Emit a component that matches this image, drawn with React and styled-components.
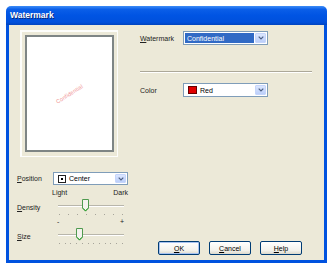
import React from "react";
import styled, { createGlobalStyle } from "styled-components";

const Global = createGlobalStyle`
  html, body { margin: 0; padding: 0; background: #fff; }
  body { font-family: "Liberation Sans", Arial, sans-serif; font-size: 7px; color: #000; }
  * { box-sizing: border-box; }
`;

const Window = styled.div`
  margin: 6px 0 0 6px;
  width: 321px;
  height: 257px;
  display: flex;
  flex-direction: column;
`;

const TitleBar = styled.div`
  height: 19px;
  flex: none;
  border-radius: 5px 5px 0 0;
  background: linear-gradient(#3d8cf7 0%, #0a5ee8 18%, #0054e3 50%, #0050dc 85%, #0043be 100%);
  color: #fff;
  font-weight: bold;
  font-size: 8.5px;
  display: flex;
  align-items: center;
  padding: 0 0 1px 4px;
  text-shadow: 1px 1px 0 #0a2a7a;
`;

const Body = styled.div`
  flex: 1;
  background: #ece9d8;
  border: 3px solid #0052df;
  border-top: none;
  display: flex;
  padding: 5px 0 5px 8px;
`;

const LeftCol = styled.div`
  width: 111px;
  display: flex;
  flex-direction: column;
`;

const RightCol = styled.div`
  margin-left: 12px;
  width: 172px;
  display: flex;
  flex-direction: column;
`;

const PreviewFrame = styled.div`
  margin-left: 3px;
  width: 98px;
  height: 127px;
  border: 1px solid #fdfdfb;
  box-shadow: inset 1px 1px 0 #fdfdfb;
  padding: 4px 3px 4px 4px;
  display: flex;
`;

const Page = styled.div`
  flex: 1;
  background: #fff;
  border: 2px solid #7e8585;
  display: flex;
  align-items: center;
  justify-content: center;
`;

const Stamp = styled.span`
  color: #f19a9a;
  font-size: 5.6px;
  transform: rotate(-32deg);
  letter-spacing: 0.1px;
`;

const Row = styled.div`
  display: flex;
  align-items: center;
  margin-top: ${(p) => p.$mt || 0}px;
`;

const Label = styled.span`
  width: ${(p) => p.$w}px;
  flex: none;
  color: #222;
`;

const Select = styled.div`
  width: ${(p) => p.$w}px;
  height: ${(p) => p.$h}px;
  border: 1px solid #7f9db9;
  background: #fff;
  display: flex;
  padding: 1px;
`;

const SelectValue = styled.div`
  flex: 1;
  display: flex;
  align-items: center;
  gap: 3px;
  padding-left: ${(p) => (p.$hl ? 2 : 3)}px;
  margin-right: 1px;
  background: ${(p) => (p.$hl ? "#316ac5" : "transparent")};
  color: ${(p) => (p.$hl ? "#fff" : "#000")};
`;

const DropBtn = styled.div`
  width: 11px;
  flex: none;
  border-radius: 1px;
  background: linear-gradient(#dbe6fe, #bccffa);
  border: 1px solid #c5d5fb;
  display: flex;
  align-items: center;
  justify-content: center;
`;

const Swatch = styled.span`
  width: 9px;
  height: 8px;
  background: #e00000;
  border: 1px solid #600;
`;

const PosIcon = styled.span`
  width: 8px;
  height: 8px;
  border: 1px solid #222;
  background: #fff;
  display: flex;
  align-items: center;
  justify-content: center;
  &::after {
    content: "";
    width: 2px;
    height: 2px;
    background: #000;
  }
`;

const Separator = styled.div`
  margin-top: ${(p) => p.$mt}px;
  height: 2px;
  border-top: 1px solid #aca899;
  border-bottom: 1px solid #fff;
`;

const ScaleLabels = styled.div`
  display: flex;
  justify-content: space-between;
  margin-top: ${(p) => p.$mt}px;
  padding-left: ${(p) => p.$pl}px;
  padding-right: ${(p) => p.$pr}px;
  height: 8px;
  line-height: 8px;
  color: #222;
`;

const SliderBox = styled.div`
  position: relative;
  width: 72px;
  height: 20px;
  margin-left: 2px;
`;

const Track = styled.div`
  position: absolute;
  left: 3px;
  right: 3px;
  top: 8px;
  height: 2px;
  border-top: 1px solid #b8b6ab;
  border-bottom: 1px solid #fff;
`;

const Thumb = styled.svg`
  position: absolute;
  top: 2px;
`;

const Ticks = styled.div`
  position: absolute;
  left: 4px;
  right: 4px;
  top: 17px;
  display: flex;
  justify-content: space-between;
`;

const Tick = styled.span`
  width: 1px;
  height: 1px;
  background: #a6a49a;
`;

const Buttons = styled.div`
  margin-top: auto;
  display: flex;
  gap: 9px;
  padding-left: 18px;
`;

const Button = styled.button`
  width: 42px;
  height: 14px;
  padding: 0;
  font: inherit;
  font-size: 7px;
  color: #000;
  border: 1px solid #003c74;
  border-radius: 2px;
  background: linear-gradient(#fff, #f3f2ec 70%, #dcd9cc);
  box-shadow: ${(p) => (p.$def ? "inset 0 0 0 1px #a8c3f0" : "none")};
  display: flex;
  align-items: center;
  justify-content: center;
`;

function Chevron() {
  return (
    <svg width="6" height="4" viewBox="0 0 6 4">
      <path d="M0.7 0.7 L3 3 L5.3 0.7" fill="none" stroke="#4d6185" strokeWidth="1.2" />
    </svg>
  );
}

function Slider({ pos, ticks }) {
  return (
    <SliderBox>
      <Track />
      <Thumb width="7" height="13" viewBox="0 0 7 13" style={{ left: pos - 3.5 }}>
        <path d="M0.5 0.5 H6.5 V9 L3.5 12.2 L0.5 9 Z" fill="#f4f3ee" stroke="#4f9a4f" strokeWidth="1" />
        <path d="M1 9.3 L3.5 11.8 L6 9.3" fill="none" stroke="#21a121" strokeWidth="1" />
      </Thumb>
      <Ticks>
        {Array.from({ length: ticks }).map((_, i) => (
          <Tick key={i} />
        ))}
      </Ticks>
    </SliderBox>
  );
}

export default function App() {
  return (
    <>
      <Global />
      <Window>
        <TitleBar>Watermark</TitleBar>
        <Body>
          <LeftCol>
            <PreviewFrame>
              <Page>
                <Stamp>Confidential</Stamp>
              </Page>
            </PreviewFrame>
            <Row $mt={15}>
              <Label $w={36}>
                <u>P</u>osition
              </Label>
              <Select $w={75} $h={13}>
                <SelectValue>
                  <PosIcon />
                  Center
                </SelectValue>
                <DropBtn>
                  <Chevron />
                </DropBtn>
              </Select>
            </Row>
            <ScaleLabels $mt={4} $pl={35} $pr={0}>
              <span>Light</span>
              <span>Dark</span>
            </ScaleLabels>
            <Row>
              <Label $w={36}>
                <u>D</u>ensity
              </Label>
              <Slider pos={30} ticks={8} />
            </Row>
            <ScaleLabels $mt={1} $pl={40} $pr={4}>
              <span>-</span>
              <span>+</span>
            </ScaleLabels>
            <Row>
              <Label $w={36}>
                <u>S</u>ize
              </Label>
              <Slider pos={24} ticks={12} />
            </Row>
          </LeftCol>
          <RightCol>
            <Row $mt={1}>
              <Label $w={43}>
                <u>W</u>atermark
              </Label>
              <Select $w={85} $h={14}>
                <SelectValue $hl>Confidential</SelectValue>
                <DropBtn>
                  <Chevron />
                </DropBtn>
              </Select>
            </Row>
            <Separator $mt={26} />
            <Row $mt={10}>
              <Label $w={43}>Color</Label>
              <Select $w={85} $h={14}>
                <SelectValue>
                  <Swatch />
                  Red
                </SelectValue>
                <DropBtn>
                  <Chevron />
                </DropBtn>
              </Select>
            </Row>
            <Buttons>
              <Button $def>
                <u>O</u>K
              </Button>
              <Button>
                <u>C</u>ancel
              </Button>
              <Button>
                <u>H</u>elp
              </Button>
            </Buttons>
          </RightCol>
        </Body>
      </Window>
    </>
  );
}
